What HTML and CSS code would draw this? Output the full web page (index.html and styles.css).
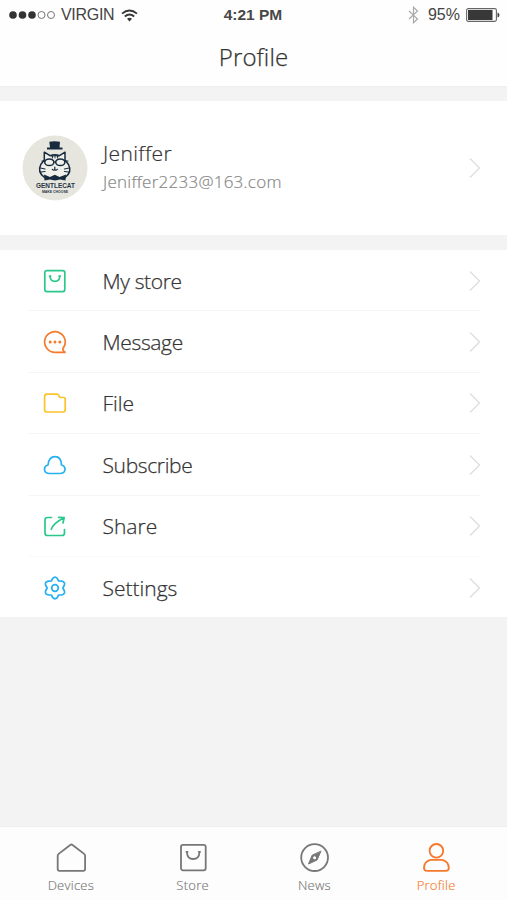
FILE: index.html
```html
<!DOCTYPE html>
<html lang="en">
<head>
<meta charset="utf-8">
<title>Profile</title>
<link rel="stylesheet" href="styles.css">
</head>
<body>
<svg width="0" height="0" class="defs">
  <symbol id="chevron" viewBox="0 0 14 24"><path d="M3 2.5 12.5 12 3 21.5"/></symbol>
</svg>
<div class="screen">
  <header class="header">
    <div class="status">
      <div class="status-left">
        <svg class="signal" width="47" height="10" viewBox="0 0 47 10">
          <g fill="#333"><circle cx="4" cy="5" r="3.8"/><circle cx="13.5" cy="5" r="3.8"/><circle cx="23" cy="5" r="3.8"/></g>
          <g fill="none" stroke="#777" stroke-width="1"><circle cx="32.5" cy="5" r="3.5"/><circle cx="42" cy="5" r="3.5"/></g>
        </svg>
        <span class="carrier">VIRGIN</span>
        <svg class="wifi" width="17" height="13" viewBox="0 0 17 13" fill="none" stroke="#383838" stroke-width="1.9">
          <path d="M1 4.6Q8.5-1.8 16 4.6M3.8 7.5Q8.5 3.4 13.2 7.5"/><path d="M6 9.8Q8.5 7.8 11 9.8L8.5 12.4Z" fill="#383838" stroke="none"/>
        </svg>
      </div>
      <span class="clock">4:21 PM</span>
      <div class="status-right">
        <svg width="11" height="18" viewBox="0 0 11 18" fill="none" stroke="#aaa" stroke-width="1.2"><path d="M1 5 9.5 13 5.5 16.8V1.2L9.5 5 1 13"/></svg>
        <span class="percent">95%</span>
        <svg class="battery" width="34" height="14" viewBox="0 0 34 14">
          <rect x=".6" y=".6" width="29.8" height="12.8" rx="1.6" fill="#fff" stroke="#666" stroke-width="1.1"/><rect x="2" y="2" width="24.5" height="10" fill="#383838"/><path d="M31.5 4.5Q33.5 5 33.5 7T31.5 9.5Z" fill="#444"/>
        </svg>
      </div>
    </div>
    <h1 class="title">Profile</h1>
  </header>

  <section class="account">
    <svg class="avatar" width="66" height="66" viewBox="0 0 66 66">
      <circle cx="33" cy="33" r="32.5" fill="#e6e6de"/>
      <path d="M22.5 42.5Q15 37 18.8 29.5L22.3 25V17.2L28 20.7Q33 18.8 37.5 20.7L43 17.2V25L46.5 29.5Q50.5 37 43 42.5Z" fill="#f1f1ec"/>
      <g fill="#182b3e">
        <path d="M27.3 6.8Q32.5 5.8 38 6.8L37.5 12.5H40.5V14.5H25V12.5H28Z"/>
        <path d="M22 39.5 28 42 32.8 39.8 37.5 42 44 39.5 43.5 45.5 38 44.5 33 45.5 28 44.5 22.5 45.5Z"/>
        <path d="M29 20 30.5 24 32 19.8 33 24.5 34 19.8 35.5 24 37 20Z"/>
      </g>
      <g fill="none" stroke="#182b3e" stroke-width="1.5" stroke-linejoin="round" stroke-linecap="round">
        <path d="M22.5 42.5Q15 37 18.8 29.5L22.3 25V17.2L28 20.7Q33 18.8 37.5 20.7L43 17.2V25L46.5 29.5Q50.5 37 43 42.5"/>
        <ellipse cx="27.3" cy="27.3" rx="4.6" ry="3.3"/><ellipse cx="38.3" cy="27.3" rx="4.6" ry="3.3"/>
        <path d="M32 27H33.6M20 26H23M43 26H46M30.3 34.3Q32 36 32.8 34.3 33.7 36 35.3 34.3M32.8 32V34M18.5 33 23 34M19 37 23 36.5M47 33 42.5 34M46.5 37 42.5 36.5" stroke-width="1.2"/>
      </g>
      <text class="brand" x="33.5" y="53.2" textLength="39" lengthAdjust="spacingAndGlyphs">GENTLECAT</text>
      <text class="motto" x="33" y="58.4" textLength="26" lengthAdjust="spacingAndGlyphs">MAKE CHOOSE</text>
    </svg>
    <div class="identity">
      <div class="name">Jeniffer</div>
      <div class="email">Jeniffer2233@163.com</div>
    </div>
    <svg class="chevron"><use href="#chevron"/></svg>
  </section>

  <nav class="menu">
    <a class="row"><svg class="icon green" viewBox="0 0 24 24"><rect x="1.8" y="1.6" width="20" height="21" rx="2"/><path d="M7.2 7.2V8Q7.5 12.3 12 12.3T16.6 8V7.2"/><path d="M6.6 7H7.6M16.2 7H17.2"/></svg><span>My store</span><svg class="chevron"><use href="#chevron"/></svg></a>
    <a class="row"><svg class="icon orange" viewBox="0 0 24 24"><path d="M22 22.3H12A10.3 10.3 0 1 1 20 18.4Q19.3 20.5 22 22.3Z"/><g fill="#f5792c" stroke="none"><circle cx="7.2" cy="12" r="1.5"/><circle cx="12" cy="12" r="1.5"/><circle cx="16.8" cy="12" r="1.5"/></g></svg><span>Message</span><svg class="chevron"><use href="#chevron"/></svg></a>
    <a class="row"><svg class="icon yellow" viewBox="0 0 24 24"><path d="M4 3.2H14Q14.8 3.2 15.3 4L17 6.5H20.5Q22.2 6.5 22.2 8.3V18.5Q22.2 21 19.8 21H4Q1.6 21 1.6 18.5V5.6Q1.6 3.2 4 3.2Z"/></svg><span class="tight">File</span><svg class="chevron"><use href="#chevron"/></svg></a>
    <a class="row"><svg class="icon blue" viewBox="0 0 24 24"><path d="M6 20.5Q1.5 20.2 1.5 16.3 1.5 13 5 12 5.8 3.6 12 3.6T18.5 12Q22 13 22 16.3 22 20.2 17.5 20.5Z"/></svg><span>Subscribe</span><svg class="chevron"><use href="#chevron"/></svg></a>
    <a class="row"><svg class="icon green" viewBox="0 0 24 24"><path d="M8.5 3.5H4.5Q2 3.5 2 6V19Q2 21.5 4.5 21.5H19Q21.5 21.5 21.5 19V15.5M8.3 15.3Q10.5 9 20.7 4M15.6 3.3 21.2 3.5 20 9"/></svg><span class="tight">Share</span><svg class="chevron"><use href="#chevron"/></svg></a>
    <a class="row"><svg class="icon blue" viewBox="0 0 24 24"><path d="M9.6 2.6Q12-.2 14.4 2.6L15.6 5 18.7 5.1Q22.4 6 21.4 9L19.9 12 21.4 15Q22.4 18 18.7 18.9L15.6 19 14.4 21.4Q12 24.2 9.6 21.4L8.4 19 5.3 18.9Q1.6 18 2.6 15L4.1 12 2.6 9Q1.6 6 5.3 5.1L8.4 5Z"/><circle cx="12" cy="12" r="3.3"/></svg><span class="tight">Settings</span><svg class="chevron"><use href="#chevron"/></svg></a>
  </nav>

  <footer class="tabs">
    <a class="tab"><svg class="tab-icon" viewBox="0 0 32 32"><path d="M4 12.6Q2.7 13.6 2.7 14.8V28Q2.7 29.8 4.5 29.8H28.3Q30.1 29.8 30.1 28V14.8Q30.1 13.6 28.8 12.6L17.6 4Q16.4 3 15.2 4Z"/></svg><span>Devices</span></a>
    <a class="tab"><svg class="tab-icon" viewBox="0 0 32 32"><rect x="4" y="3.8" width="24.7" height="25.5" rx="2"/><path d="M10 11V11.5Q10.3 18 16.2 18T22.4 11.5V11"/><path d="M9.4 10.8H10.6M21.8 10.8H23"/></svg><span>Store</span></a>
    <a class="tab"><svg class="tab-icon" viewBox="0 0 32 32"><circle cx="16.6" cy="16.6" r="13.4"/><path d="M22.8 10.5 19.1 19 10.5 23 14 14.5Z" fill="#777" stroke-width="1"/><circle cx="16.6" cy="16.7" r="1.5" fill="#fff" stroke="none"/></svg><span>News</span></a>
    <a class="tab active"><svg class="tab-icon" viewBox="0 0 32 32"><circle cx="16.4" cy="9.8" r="6.8"/><path d="M10.5 18.8H22.2Q28.8 20.5 28.8 27 28.8 29.8 25.7 29.8H7.1Q4 29.8 4 27 4 20.5 10.5 18.8Z"/></svg><span>Profile</span></a>
  </footer>
</div>
</body>
</html>
```
FILE: styles.css
```css
* { box-sizing: border-box; }
body { margin: 0; font-family: "Open Sans", "Noto Sans", sans-serif; font-weight: 300; color: #333; }
.defs { display: block; height: 0; }
.screen { height: 900px; display: flex; flex-direction: column; background: #f3f3f3; }
.header { height: 87px; background: #fefefe; border-bottom: 1px solid #efefef; }
.status { height: 30px; padding: 0 8px 0 9px; display: grid; grid-template-columns: 1fr auto 1fr; align-items: center; font: 400 16px "Liberation Sans", sans-serif; color: #444; }
.status-left, .status-right { display: flex; align-items: center; }
.status-right { justify-content: flex-end; }
.carrier { margin-left: 5px; width: 53px; letter-spacing: -.3px; white-space: nowrap; }
.wifi { margin-left: 7px; }
.clock { font-weight: 700; font-size: 15.5px; color: #484848; position: relative; left: -1px; }
.percent { margin: 0 5px 0 9px; }
.battery { position: relative; left: 1px; }
.title { margin: 10px 0 0; text-align: center; font-size: 24px; line-height: 33px; font-weight: 300; letter-spacing: .1px; -webkit-text-stroke: .25px; }
.account { height: 134px; margin: 14px 0 15px; padding: 0 26px 0 22px; display: flex; align-items: center; background: #fff; }
.identity { flex: 1; margin-left: 15px; -webkit-text-stroke: .2px; }
.name { font-size: 21px; line-height: 28px; letter-spacing: .35px; margin-top: -1px; }
.email { font-size: 17px; line-height: 28px; color: #888; letter-spacing: .25px; margin-top: 1px; }
.brand, .motto { font-family: "Liberation Sans", sans-serif; font-weight: 700; text-anchor: middle; fill: #273544; }
.brand { font-size: 6.5px; }
.motto { font-size: 4px; }
.chevron { width: 14px; height: 24px; fill: none; stroke: #dedede; stroke-width: 1.4; }
.menu { height: 367px; display: grid; grid-template-rows: repeat(6, 61.4px); padding: 0 26px 0 28px; background: #fff; }
.row { display: flex; align-items: center; padding-top: 1px; border-bottom: 1px solid #f5f5f5; font-size: 21px; }
.row:nth-last-child(2) { border-bottom-color: #fafafa; }
.row:last-child { border-bottom: 0; }
.row span { flex: 1; margin-left: 35.5px; letter-spacing: -.35px; -webkit-text-stroke: .25px; }
.row .tight { letter-spacing: 0; }
.icon { width: 24px; height: 24px; margin-left: 15px; fill: none; stroke-width: 1.7; stroke-linejoin: round; stroke-linecap: round; }
.green { stroke: #2bc88b; }
.orange { stroke: #f5792c; }
.yellow { stroke: #fcc32c; }
.blue { stroke: #25b1f2; }
.tabs { height: 74px; margin-top: auto; padding: 0 10px; display: grid; grid-template-columns: repeat(4, 1fr); background: #fdfdfd; border-top: 1px solid #eee; }
.tab { display: flex; flex-direction: column; align-items: center; padding-top: 14px; font-size: 13px; line-height: 22px; color: #777; stroke: #777; }
.tab span { margin-top: 1px; letter-spacing: .25px; -webkit-text-stroke: .15px; }
.tab-icon { width: 32px; height: 32px; fill: none; stroke-width: 1.8; stroke-linejoin: round; stroke-linecap: round; }
.active { color: #f5792c; stroke: #f5792c; }
```
